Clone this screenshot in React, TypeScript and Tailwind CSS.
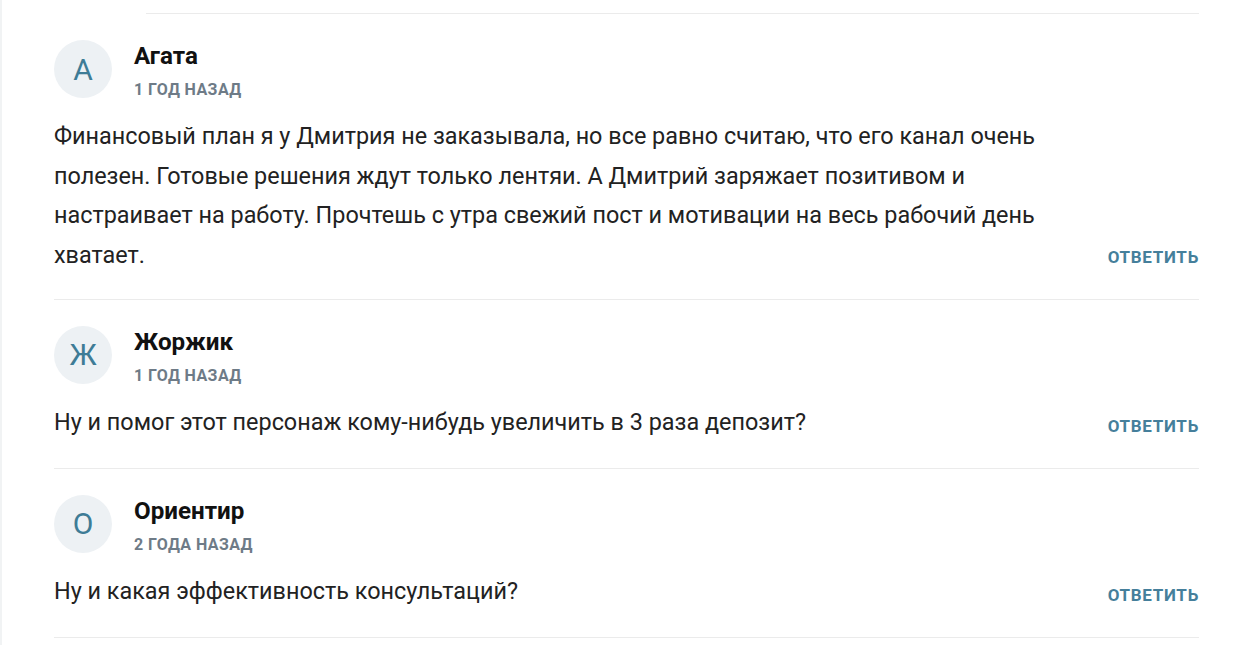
import React from "react";

type C = { letter: string; name: string; date: string; text: string };

const comments: C[] = [
  {
    letter: "А",
    name: "Агата",
    date: "1 год назад",
    text: "Финансовый план я у Дмитрия не заказывала, но все равно считаю, что его канал очень полезен. Готовые решения ждут только лентяи. А Дмитрий заряжает позитивом и настраивает на работу. Прочтешь с утра свежий пост и мотивации на весь рабочий день хватает.",
  },
  {
    letter: "Ж",
    name: "Жоржик",
    date: "1 год назад",
    text: "Ну и помог этот персонаж кому-нибудь увеличить в 3 раза депозит?",
  },
  {
    letter: "О",
    name: "Ориентир",
    date: "2 года назад",
    text: "Ну и какая эффективность консультаций?",
  },
];

function Comment({ c }: { c: C }) {
  return (
    <div className="border-b border-[#ebebeb] pt-[26px] pb-[23px]">
      <div className="flex">
        <div className="flex h-[58px] w-[58px] shrink-0 items-center justify-center rounded-full bg-[#edf1f4] text-[30px] text-[#3e7c96]">
          {c.letter}
        </div>
        <div className="ml-[22px] pt-[1px]">
          <div className="text-[24.2px] font-bold leading-[30px] text-[#111]">{c.name}</div>
          <div className="mt-[9px] text-[16px] font-bold uppercase leading-[20px] tracking-[0.4px] text-[#6e7b87]">
            {c.date}
          </div>
        </div>
      </div>
      <div className="mt-[17px] flex items-start">
        <p className="flex-1 text-[23.4px] leading-[39.7px] text-[#222]">{c.text}</p>
        <button className="ml-[50px] self-end shrink-0 pt-[12px] pb-[8px] text-[17px] font-bold uppercase leading-[22px] tracking-[0.7px] text-[#457f9b]">
          Ответить
        </button>
      </div>
    </div>
  );
}

export default function App() {
  return (
    <div
      className="min-h-[645px] w-[1243px] bg-white border-l-2 border-[#f1f3f4]"
      style={{ fontFamily: "Roboto, 'Noto Sans', sans-serif" }}
    >
      <div className="pt-[13px]">
        <div className="ml-[144px] mr-[44px] border-t border-[#ebebeb]" />
        <div className="ml-[52px] mr-[44px]">
          {comments.map((c, i) => (
            <Comment key={i} c={c} />
          ))}
        </div>
      </div>
    </div>
  );
}
